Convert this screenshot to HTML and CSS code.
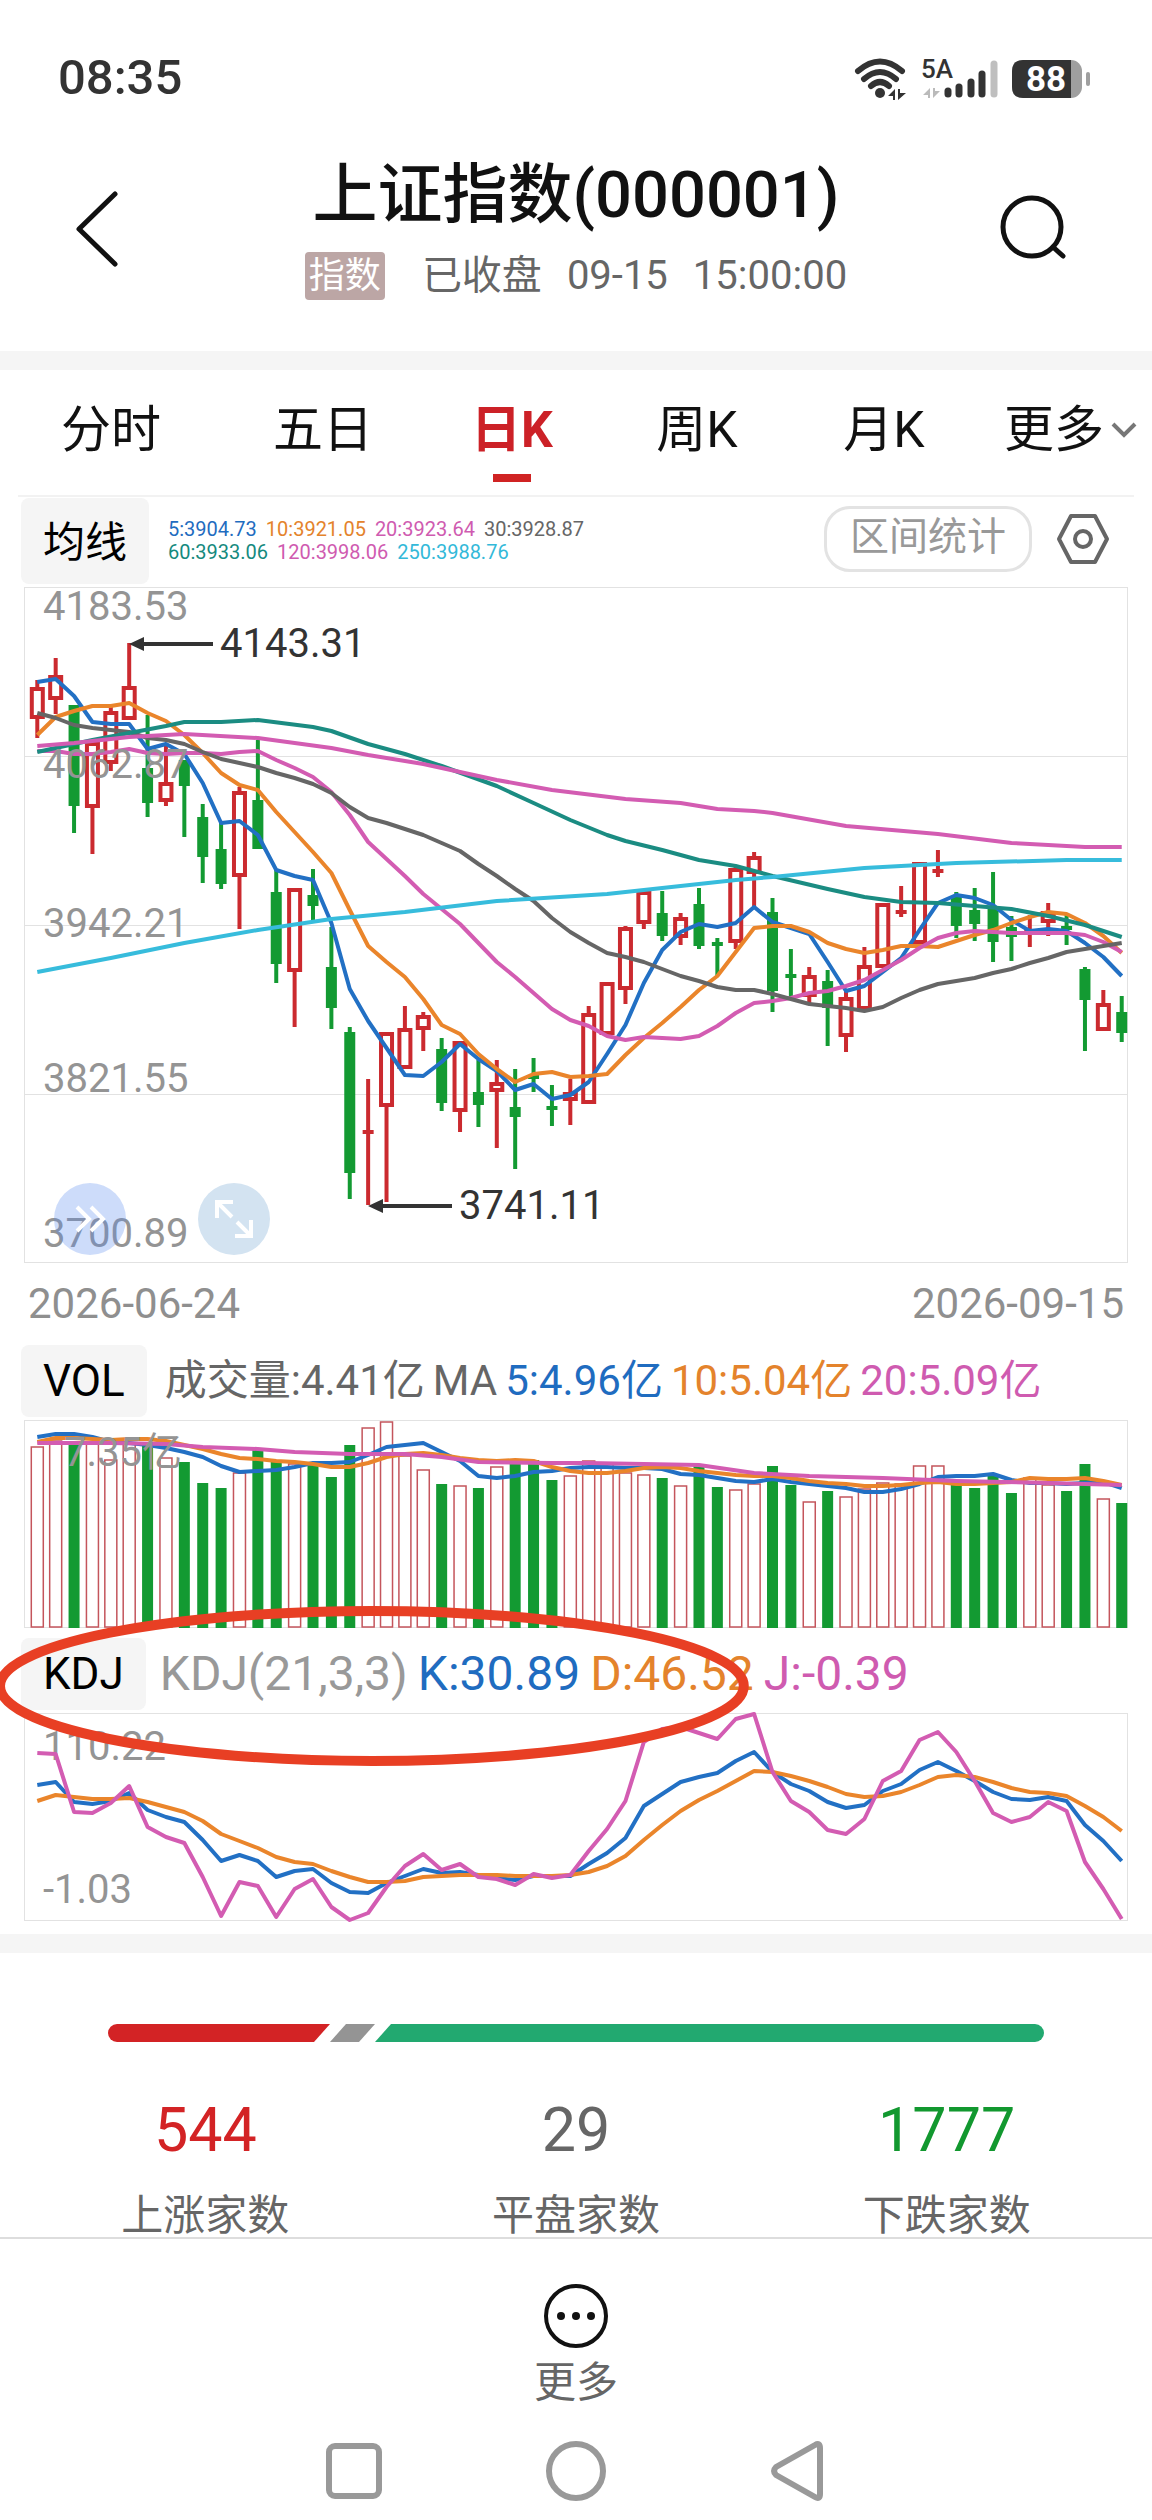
FILE: index.html
```html
<!DOCTYPE html>
<html lang="zh-CN">
<head>
    <meta charset="UTF-8">
    <meta name="viewport" content="width=device-width, initial-scale=1.0">
    <title>上证指数(000001)</title>
    <link rel="stylesheet" href="styles.css">
</head>
<body>
    <div class="status-bar">
        <span class="clock">08:35</span>
        <div class="status-icons">
            <svg width="54" height="42" viewBox="0 0 54 42">
                <g fill="none" stroke="#333" stroke-width="6" stroke-linecap="round">
                    <path d="M4 13 Q26 -6 48 13"/>
                    <path d="M10 21 Q26 7 42 21"/>
                    <path d="M17 28 Q26 20 35 28"/>
                </g>
                <circle cx="26" cy="35" r="5" fill="#333"/>
                <path d="M41 31 V42 H39 V38 L34 38 Z M44 31 H46 V35 L52 35 L44 42 Z" fill="#333"/>
            </svg>
            <svg width="78" height="54" viewBox="0 -12 78 54">
                <text x="0" y="20" class="net-label">5A</text>
                <path d="M9 30 V40 H7 V37 L2 37 Z M12 30 H14 V33 L19 33 L12 40 Z" fill="#bbb"/>
                <g stroke="#333" stroke-width="7" stroke-linecap="round">
                    <path d="M27 33 V36"/>
                    <path d="M38 29 V36"/>
                    <path d="M50 24 V36"/>
                    <path d="M61 16 V36"/>
                    <path d="M73 6 V36" stroke="#bfbfbf"/>
                </g>
            </svg>
            <svg width="78" height="42" viewBox="0 0 78 42">
                <rect x="0" y="2" width="70" height="38" rx="11" fill="#9f9f9f"/>
                <path d="M11 2 H59 V40 H11 Q0 40 0 29 V13 Q0 2 11 2 Z" fill="#333"/>
                <rect x="74" y="14" width="4" height="14" rx="2" fill="#9f9f9f"/>
                <text x="14" y="33" class="battery-label">88</text>
            </svg>
        </div>
    </div>

    <header class="header">
        <button class="icon-btn" aria-label="返回">
            <svg width="44" height="76" viewBox="0 0 44 76">
                <path d="M40 3 L4 38 L40 73" fill="none" stroke="#111" stroke-width="5" stroke-linecap="round" stroke-linejoin="round"/>
            </svg>
        </button>
        <div class="heading">
            <h1>上证指数(000001)</h1>
            <div class="sub">
                <span class="badge">指数</span>
                <span>已收盘</span>
                <span>09-15</span>
                <span>15:00:00</span>
            </div>
        </div>
        <button class="icon-btn search" aria-label="搜索">
            <svg width="68" height="68" viewBox="0 0 68 68">
                <circle cx="32" cy="32" r="29" fill="none" stroke="#111" stroke-width="5"/>
                <path d="M53 52 L63 61" stroke="#111" stroke-width="5" stroke-linecap="round"/>
            </svg>
        </button>
    </header>

    <div class="band"></div>

    <nav class="tabs">
        <button class="tab">分时</button>
        <button class="tab">五日</button>
        <button class="tab active">日K</button>
        <button class="tab">周K</button>
        <button class="tab">月K</button>
        <button class="tab more">更多
            <svg width="28" height="18" viewBox="0 0 28 18">
                <path d="M3 3 L14 14 L25 3" fill="none" stroke="#777" stroke-width="4"/>
            </svg>
        </button>
    </nav>

    <main class="charts">
        <div class="ma-row">
            <button class="tag tag-ma">均线</button>
            <div class="ma-legend">
                <div>
                    <span class="c-blue">5:3904.73</span>
                    <span class="c-orange">10:3921.05</span>
                    <span class="c-pink">20:3923.64</span>
                    <span class="c-gray">30:3928.87</span>
                </div>
                <div>
                    <span class="c-teal">60:3933.06</span>
                    <span class="c-pink">120:3998.06</span>
                    <span class="c-cyan">250:3988.76</span>
                </div>
            </div>
            <button class="range-btn">区间统计</button>
            <button class="icon-btn" aria-label="设置">
                <svg width="54" height="52" viewBox="0 0 54 52">
                    <path d="M15 3 H39 L51 26 L39 49 H15 L3 26 Z" fill="none" stroke="#666" stroke-width="4" stroke-linejoin="round"/>
                    <circle cx="27" cy="26" r="8" fill="none" stroke="#666" stroke-width="4"/>
                </svg>
            </button>
        </div>

        <div class="plot">
            <svg id="kline" class="chart" viewBox="0 0 1104 676"></svg>
            <div class="float-btns">
                <button class="round-btn next" aria-label="展开">
                    <svg width="36" height="32" viewBox="0 0 36 32">
                        <path d="M5 4 L17 16 L5 28 M19 4 L31 16 L19 28" fill="none" stroke="#fff" stroke-width="4"/>
                    </svg>
                </button>
                <button class="round-btn full" aria-label="全屏">
                    <svg width="40" height="40" viewBox="0 0 40 40">
                        <path d="M3 19 V3 H19 M3 3 L18 18 M37 21 V37 H21 M37 37 L23 23" fill="none" stroke="#fff" stroke-width="4"/>
                    </svg>
                </button>
            </div>
        </div>
        <div class="dates">
            <span>2026-06-24</span>
            <span>2026-09-15</span>
        </div>

        <div class="ind-row">
            <button class="tag">VOL</button>
            <div class="vol-legend">
                <span class="c-gray">成交量:4.41亿</span>
                <span class="c-gray">MA</span>
                <span class="c-blue">5:4.96亿</span>
                <span class="c-orange">10:5.04亿</span>
                <span class="c-pink">20:5.09亿</span>
            </div>
        </div>
        <div class="plot">
            <svg id="vol" class="chart" viewBox="0 0 1104 208"></svg>
        </div>

        <div class="kdj">
            <div class="ind-row">
                <button class="tag">KDJ</button>
                <div class="kdj-legend">
                    <span class="c-light">KDJ(21,3,3)</span>
                    <span class="c-blue">K:30.89</span>
                    <span class="c-orange">D:46.52</span>
                    <span class="c-pink">J:-0.39</span>
                </div>
            </div>
            <div class="plot">
                <svg id="kdj" class="chart" viewBox="0 0 1104 208"></svg>
            </div>
            <svg class="marker" viewBox="0 0 749 162">
                <ellipse cx="372" cy="81" rx="372" ry="75" fill="none" stroke="#e83f24" stroke-width="10"/>
            </svg>
        </div>
    </main>

    <div class="band"></div>

    <section class="breadth">
        <div class="ratio">
            <div class="seg up"></div>
            <div class="seg flat"></div>
            <div class="seg down"></div>
        </div>
        <div class="counts">
            <div class="count">
                <strong class="c-up">544</strong>
                <span>上涨家数</span>
            </div>
            <div class="count">
                <strong>29</strong>
                <span>平盘家数</span>
            </div>
            <div class="count">
                <strong class="c-down">1777</strong>
                <span>下跌家数</span>
            </div>
        </div>
    </section>

    <footer class="toolbar">
        <button class="more-btn">
            <svg width="66" height="66" viewBox="0 0 66 66">
                <circle cx="33" cy="33" r="30" fill="none" stroke="#111" stroke-width="4"/>
                <circle cx="18" cy="33" r="4" fill="#111"/>
                <circle cx="33" cy="33" r="4" fill="#111"/>
                <circle cx="48" cy="33" r="4" fill="#111"/>
            </svg>
            更多
        </button>
    </footer>

    <nav class="sys-nav">
        <button class="icon-btn" aria-label="最近任务">
            <svg width="62" height="62" viewBox="0 0 62 62">
                <rect x="6" y="6" width="50" height="50" rx="6" fill="none" stroke="#999" stroke-width="6"/>
            </svg>
        </button>
        <button class="icon-btn" aria-label="主页">
            <svg width="62" height="62" viewBox="0 0 62 62">
                <circle cx="31" cy="31" r="27" fill="none" stroke="#999" stroke-width="6"/>
            </svg>
        </button>
        <button class="icon-btn" aria-label="后退">
            <svg width="62" height="62" viewBox="0 0 62 62">
                <path d="M48 5 Q53 2 53 8 V54 Q53 60 48 57 L9 35 Q5 31 9 27 Z" fill="none" stroke="#999" stroke-width="6" stroke-linejoin="round"/>
            </svg>
        </button>
    </nav>

    <script src="charts.js"></script>
</body>
</html>
```
FILE: styles.css
```css
* {
    box-sizing: border-box;
}
body {
    margin: 0;
    background: #fff;
    color: #111;
    font-family: Roboto, "Noto Sans CJK SC", sans-serif;
}
button {
    padding: 0;
    border: none;
    background: none;
    color: inherit;
    font: inherit;
    cursor: pointer;
}
svg {
    display: block;
}

/* status bar */
.status-bar {
    display: flex;
    justify-content: space-between;
    align-items: center;
    padding: 44px 62px 0 58px;
    line-height: 68px;
}
.clock {
    font-size: 49px;
    font-weight: 500;
    color: #333;
}
.status-icons {
    display: flex;
    align-items: flex-end;
    gap: 13px;
    padding-bottom: 10px;
}
.net-label {
    font-size: 26px;
    font-weight: 500;
    fill: #333;
}
.battery-label {
    font-size: 35px;
    font-weight: 700;
    fill: #fff;
}

/* header */
.header {
    display: grid;
    grid-template-columns: 1fr auto 1fr;
    align-items: center;
    padding: 45px 84px 51px 75px;
}
.header .icon-btn {
    justify-self: start;
}
.header .search {
    justify-self: end;
}
.heading {
    padding-left: 9px;
    text-align: center;
}
h1 {
    margin: 0 0 19px;
    font-size: 65px;
    font-weight: 500;
    line-height: 76px;
}
.sub {
    display: flex;
    justify-content: center;
    gap: 25px;
    font-size: 40px;
    line-height: 48px;
    color: #666;
}
.badge {
    margin-right: 12px;
    padding: 0 4px;
    border-radius: 4px;
    background: #bca6a5;
    color: #fff;
    font-size: 36px;
}
.band {
    height: 19px;
    background: #f5f5f5;
}

/* period tabs */
.tabs {
    display: grid;
    grid-template-columns: 222fr 202fr 176fr 194fr 180fr 178fr;
    line-height: 72px;
    padding: 24px 0 29px;
    font-size: 50px;
}
.tab {
    position: relative;
}
.tab.active {
    color: #cc2127;
    font-weight: 700;
}
.tab.active::after {
    content: "";
    position: absolute;
    left: 50%;
    bottom: -16px;
    width: 38px;
    height: 8px;
    margin-left: -19px;
    background: #d02323;
}
.tab.more {
    display: flex;
    justify-content: flex-end;
    align-items: center;
    gap: 6px;
    padding-right: 14px;
    white-space: nowrap;
}

/* charts */
.charts {
    padding-bottom: 13px;
}
.ma-row {
    display: flex;
    align-items: center;
    margin: 0 18px;
    padding: 1px 24px 3px 3px;
    border-top: 2px solid #f2f2f2;
}
.tag {
    height: 72px;
    padding: 0 22px;
    border-radius: 8px;
    background: #f5f5f5;
    color: #000;
    font-size: 44px;
}
.tag-ma {
    height: 86px;
    padding-bottom: 6px;
    font-size: 42px;
}
.ma-legend {
    flex: 1;
    margin-left: 19px;
    font-size: 20px;
    line-height: 23px;
}
.ma-legend div {
    display: flex;
    gap: 9px;
}
.range-btn {
    height: 66px;
    margin: 0 24px 4px 0;
    padding: 0 23px 4px;
    border: 3px solid #e3e3e3;
    border-radius: 26px;
    color: #999;
    font-size: 39px;
    line-height: 56px;
}
.ma-row .icon-btn {
    margin-bottom: 4px;
}
.plot {
    position: relative;
    margin: 0 24px;
}
.chart {
    width: 100%;
    height: auto;
    overflow: visible;
}
.chart text {
    font-size: 40px;
    fill: #949494;
}
.chart .note {
    fill: #333;
}
.float-btns {
    position: absolute;
    left: 30px;
    bottom: 8px;
    display: flex;
    gap: 72px;
}
.round-btn {
    display: flex;
    justify-content: center;
    align-items: center;
    width: 72px;
    height: 72px;
    border-radius: 50%;
}
.next {
    background: rgba(90, 140, 240, 0.3);
}
.full {
    background: #d3e3f1;
}
.dates {
    display: flex;
    justify-content: space-between;
    margin: 0 28px;
    font-size: 42px;
    line-height: 82px;
    color: #8f8f8f;
}
.ind-row {
    display: flex;
    align-items: center;
    height: 72px;
    margin: 0 21px 3px;
}
.vol-legend, .kdj-legend {
    display: flex;
    gap: 8px;
    margin-left: 18px;
    font-size: 42px;
    line-height: 72px;
    white-space: nowrap;
}
.kdj-legend {
    margin-left: 14px;
    gap: 10px;
    font-size: 48px;
}
.kdj {
    position: relative;
    padding-top: 10px;
}
.marker {
    position: absolute;
    left: 0;
    top: -23px;
    width: 65%;
    overflow: visible;
}
.c-blue {
    color: #1f6cc0;
}
.c-orange {
    color: #e4832c;
}
.c-pink {
    color: #cf5bb0;
}
.c-gray {
    color: #666;
}
.c-light {
    color: #999;
}
.c-teal {
    color: #158a7e;
}
.c-cyan {
    color: #33b9d9;
}

/* advance / decline */
.breadth {
    padding: 71px 20px 0;
}
.ratio {
    display: flex;
    height: 18px;
    margin: 0 88px 53px;
    border-radius: 9px;
    overflow: hidden;
}
.seg.up {
    flex: 222;
    background: #d32325;
    clip-path: polygon(0 0, 100% 0, calc(100% - 16px) 100%, 0 100%);
}
.seg.flat {
    flex: 45;
    background: #949494;
    clip-path: polygon(16px 0, 100% 0, calc(100% - 16px) 100%, 0 100%);
}
.seg.down {
    flex: 669;
    background: #22a970;
    clip-path: polygon(16px 0, 100% 0, 100% 100%, 0 100%);
}
.counts {
    display: grid;
    grid-template-columns: repeat(3, 1fr);
    text-align: center;
    color: #666;
}
.count {
    display: flex;
    flex-direction: column;
    gap: 30px;
    font-size: 42px;
    line-height: 42px;
}
.count strong {
    font-size: 61px;
    font-weight: 400;
    line-height: 70px;
}
.count .c-up {
    color: #d32325;
}
.count .c-down {
    color: #12982f;
}

/* bottom bars */
.toolbar {
    display: flex;
    justify-content: center;
    padding-top: 44px;
    border-top: 2px solid #ddd;
}
.more-btn {
    display: flex;
    flex-direction: column;
    align-items: center;
    gap: 8px;
    font-size: 42px;
    line-height: 52px;
    color: #666;
}
.sys-nav {
    display: flex;
    justify-content: center;
    gap: 160px;
    padding: 31px 0 14px;
}
```
FILE: charts.js
```js
const RED = '#cb2a2f';
const GREEN = '#139a32';
const COLORS = {
    blue: '#2270c4', orange: '#ea852b', pink: '#d35cb2',
    gray: '#666', teal: '#1b8c82', cyan: '#37bcdc'
};
const step = 18.38;
const xAt = i => 13.3 + i * step;

// direction, high, body top, body bottom, low
const candles = [
    'r 93 100 132 151', 'r 71 88 113 127', 'g 118 118 219 246', 'r 153 155 221 267', 'r 120 124 177 184',
    'r 56 99 133 133', 'g 128 181 216 230', 'r 158 195 215 219', 'g 173 173 199 250', 'g 217 230 270 296',
    'g 236 262 297 302', 'r 200 204 290 342', 'g 153 213 262 262', 'g 282 305 377 396', 'r 301 301 385 440',
    'g 282 308 319 333', 'g 340 380 421 442', 'g 440 445 586 612', 'r 492 543 547 618', 'r 445 445 520 615',
    'r 419 441 482 482', 'r 425 428 443 464', 'g 451 462 516 524', 'r 454 454 525 545', 'g 473 505 518 540',
    'r 473 495 505 561', 'g 482 520 530 582', 'g 471 488 492 505', 'g 498 519 523 539', 'r 492 505 514 538',
    'r 419 426 517 517', 'r 395 395 448 448', 'r 339 340 403 417', 'r 304 304 337 342', 'g 304 326 349 354',
    'r 326 330 351 358', 'g 301 317 359 362', 'g 351 355 359 389', 'r 280 281 356 362', 'r 265 269 287 320',
    'g 311 325 404 425', 'g 362 387 391 411', 'r 380 388 410 418', 'g 383 394 421 459', 'r 404 410 450 465',
    'r 360 378 423 423', 'r 316 316 381 381', 'r 299 323 327 330', 'r 275 275 357 357', 'r 263 282 286 290',
    'g 305 310 339 351', 'g 301 323 337 354', 'g 285 320 355 375', 'g 329 340 350 374', 'r 328 343 347 360',
    'r 316 324 336 349', 'g 328 339 343 358', 'g 380 382 413 464', 'r 403 416 444 444', 'g 409 425 446 455'
].map(row => {
    const [dir, ...v] = row.split(' ');
    return { up: dir === 'r', v: v.map(Number) };
});

const ma5 = [95, 92, 109, 135, 137, 137, 162, 157, 167, 196, 236, 234, 248, 283, 289, 293, 336, 402, 434, 461,
    488, 489, 475, 457, 472, 484, 503, 497, 512, 508, 495, 467, 438, 396, 363, 345, 337, 340, 336, 320,
    335, 341, 347, 375, 404, 399, 385, 371, 343, 316, 308, 311, 318, 333, 344, 342, 344, 356, 370, 389];
const ma10 = [148, 130, 124, 119, 119, 116, 126, 134, 148, 166, 186, 198, 203, 225, 245, 265, 286, 323, 359, 375,
    390, 412, 438, 447, 467, 482, 495, 487, 485, 490, 489, 487, 468, 451, 436, 420, 403, 389, 365, 341,
    339, 339, 345, 356, 362, 366, 363, 359, 359, 360, 354, 348, 343, 336, 330, 325, 327, 336, 349, 366];
const ma20 = [164, 164, 167, 167, 165, 162, 166, 167, 166, 166, 167, 165, 164, 173, 181, 190, 205, 228, 255, 272,
    289, 307, 322, 337, 356, 375, 390, 406, 422, 433, 439, 449, 453, 450, 451, 452, 449, 439, 426, 416,
    414, 411, 406, 404, 399, 393, 383, 373, 361, 351, 346, 344, 345, 346, 346, 346, 346, 348, 355, 365];
const ma30 = [126, 131, 138, 141, 143, 145, 151, 153, 157, 165, 172, 176, 180, 186, 191, 197, 206, 220, 231, 236,
    242, 248, 256, 264, 277, 289, 302, 314, 331, 345, 356, 366, 370, 375, 382, 389, 394, 400, 403, 403,
    407, 412, 417, 419, 421, 424, 420, 411, 403, 397, 394, 391, 386, 382, 376, 371, 365, 362, 359, 356];
// slow averages: [index, y] at the turning points only
const ma60 = [[0, 165], [1, 161], [3, 153], [5, 146], [7, 139], [8, 135], [10, 135], [12, 133], [15, 140], [16, 144],
    [18, 157], [20, 167], [22, 179], [25, 199], [27, 216], [29, 233], [31, 248], [32, 254], [34, 263], [36, 273],
    [38, 279], [40, 289], [43, 302], [45, 310], [47, 315], [49, 316], [51, 319], [53, 322], [55, 329], [57, 338], [59, 350]];
const ma120 = [[0, 159], [2, 156], [4, 152], [5, 150], [8, 147], [12, 151], [16, 161], [18, 168], [21, 177], [25, 193],
    [28, 203], [32, 212], [35, 216], [37, 222], [39, 224], [40, 226], [44, 239], [49, 247], [53, 256], [57, 260], [59, 260]];
const ma250 = [[0, 385], [4, 371], [8, 356], [12, 343], [16, 332], [20, 325], [25, 314], [31, 307], [38, 293],
    [40, 290], [45, 281], [50, 276], [56, 273], [59, 273]];

const volumes = [26, 20, 21, 21, 39, 22, 25, 37, 42, 63, 68, 52, 30, 42, 43, 42, 57, 25, 7, 1,
    35, 49, 64, 65, 68, 46, 44, 40, 60, 55, 40, 42, 52, 54, 58, 65, 46, 67, 69, 63,
    46, 65, 81, 71, 76, 68, 62, 63, 45, 45, 65, 68, 56, 73, 57, 64, 71, 44, 78, 83];
const vol5 = [17, 14, 14, 17, 22, 23, 25, 28, 32, 37, 46, 52, 51, 50, 47, 43, 43, 42, 35, 27,
    25, 23, 32, 41, 56, 58, 56, 52, 51, 48, 47, 47, 48, 48, 49, 54, 55, 58, 61, 62,
    59, 62, 64, 66, 68, 72, 72, 69, 64, 57, 56, 56, 54, 60, 63, 63, 64, 63, 62, 68];
const vol10 = [22, 18, 18, 19, 20, 19, 19, 21, 25, 29, 34, 38, 39, 41, 42, 44, 47, 47, 43, 37,
    34, 33, 35, 38, 40, 41, 40, 41, 47, 51, 53, 53, 51, 48, 47, 48, 51, 53, 55, 56,
    56, 58, 61, 63, 64, 66, 66, 65, 63, 62, 64, 64, 63, 62, 58, 59, 59, 58, 61, 65];
const vol20 = [[0, 23], [4, 23], [7, 24], [9, 27], [12, 29], [14, 32], [17, 34], [20, 34], [22, 37], [24, 42],
    [28, 43], [30, 43], [33, 44], [36, 45], [39, 53], [42, 56], [46, 58], [50, 61], [55, 63], [59, 65]];

const kLine = [72, 69, 89, 91, 88, 80, 97, 104, 109, 127, 148, 142, 148, 164, 158, 156, 170, 179, 180, 170,
    163, 156, 160, 159, 162, 165, 167, 163, 163, 163, 151, 140, 125, 93, 81, 69, 64, 60, 48, 39,
    59, 71, 78, 89, 95, 92, 78, 71, 57, 49, 58, 68, 79, 86, 87, 84, 88, 112, 128, 148];
const dLine = [88, 82, 84, 86, 86, 85, 89, 94, 99, 108, 121, 128, 135, 144, 149, 151, 158, 164, 169, 169,
    168, 164, 163, 162, 162, 162, 163, 163, 163, 162, 159, 153, 143, 127, 112, 98, 87, 78, 68, 58,
    59, 63, 68, 74, 81, 84, 83, 79, 72, 64, 62, 64, 69, 75, 79, 80, 83, 93, 104, 118];
const jLine = [40, 41, 99, 100, 90, 73, 114, 124, 130, 164, 203, 169, 173, 204, 176, 166, 194, 207, 200, 174,
    153, 141, 157, 151, 164, 166, 172, 161, 165, 162, 138, 116, 88, 29, 16, 14, 20, 26, 6, 1,
    59, 88, 99, 117, 121, 106, 68, 58, 27, 19, 39, 68, 100, 109, 104, 89, 98, 149, 176, 206];

function line(data, color) {
    const points = data.map((p, i) => Array.isArray(p) ? `${xAt(p[0])},${p[1]}` : `${xAt(i)},${p}`);
    return `<polyline points="${points.join(' ')}" fill="none" stroke="${COLORS[color]}" stroke-width="4" stroke-linejoin="round"/>`;
}

function frame(height, rows) {
    let out = `<rect x="0.5" y="0.5" width="1103" height="${height - 1}" fill="none" stroke="#e2e2e2"/>`;
    for (let r = 1; r < rows; r++) {
        const y = Math.round(height * r / rows) + 0.5;
        out += `<path d="M0 ${y} H1104" stroke="#e2e2e2"/>`;
    }
    return out;
}

function label(x, y, text, cls = '') {
    return `<text x="${x}" y="${y}" class="${cls}">${text}</text>`;
}

function arrow(x, y, text) {
    return `<path d="M${x + 10} ${y} H${x + 84}" stroke="#333" stroke-width="4"/>
        <path d="M${x} ${y} l15 -7 v14 z" fill="#333"/>` + label(x + 91, y + 13, text, 'note');
}

function candle(c, i) {
    const x = xAt(i);
    const [high, top, bottom, low] = c.v;
    if (!c.up) {
        return `<path d="M${x} ${high} V${low}" stroke="${GREEN}" stroke-width="4"/>
            <rect x="${x - 5.5}" y="${top}" width="11" height="${bottom - top}" fill="${GREEN}"/>`;
    }
    const wick = `<path d="M${x} ${high} V${top + 1} M${x} ${bottom - 1} V${low}" stroke="${RED}" stroke-width="4"/>`;
    if (bottom - top < 6) {
        return wick + `<rect x="${x - 5.5}" y="${top}" width="11" height="4" fill="${RED}"/>`;
    }
    return wick + `<rect x="${x - 5.5}" y="${top + 2}" width="11" height="${bottom - top - 4}" fill="none" stroke="${RED}" stroke-width="4"/>`;
}

function volumeBar(y, i) {
    const x = xAt(i);
    if (candles[i].up) {
        return `<rect x="${x - 6}" y="${y + 1}" width="12" height="${206 - y}" fill="#fff" stroke="#c4555c" stroke-width="1.5"/>`;
    }
    return `<rect x="${x - 5.5}" y="${y}" width="11" height="${208 - y}" fill="${GREEN}"/>`;
}

document.getElementById('kline').innerHTML = frame(676, 4)
    + candles.map(candle).join('')
    + line(ma5, 'blue') + line(ma10, 'orange') + line(ma20, 'pink') + line(ma30, 'gray')
    + line(ma60, 'teal') + line(ma120, 'pink') + line(ma250, 'cyan')
    + label(19, 33, '4183.53') + label(19, 191, '4062.87') + label(19, 350, '3942.21')
    + label(19, 505, '3821.55') + label(19, 660, '3700.89')
    + arrow(105, 57, '4143.31') + arrow(344, 619, '3741.11');

document.getElementById('vol').innerHTML = frame(208, 1)
    + volumes.map(volumeBar).join('')
    + line(vol5, 'blue') + line(vol10, 'orange') + line(vol20, 'pink')
    + label(40, 46, '7.35亿');

document.getElementById('kdj').innerHTML = frame(208, 1)
    + label(19, 47, '110.22') + label(19, 190, '-1.03')
    + line(kLine, 'blue') + line(dLine, 'orange') + line(jLine, 'pink');
```
